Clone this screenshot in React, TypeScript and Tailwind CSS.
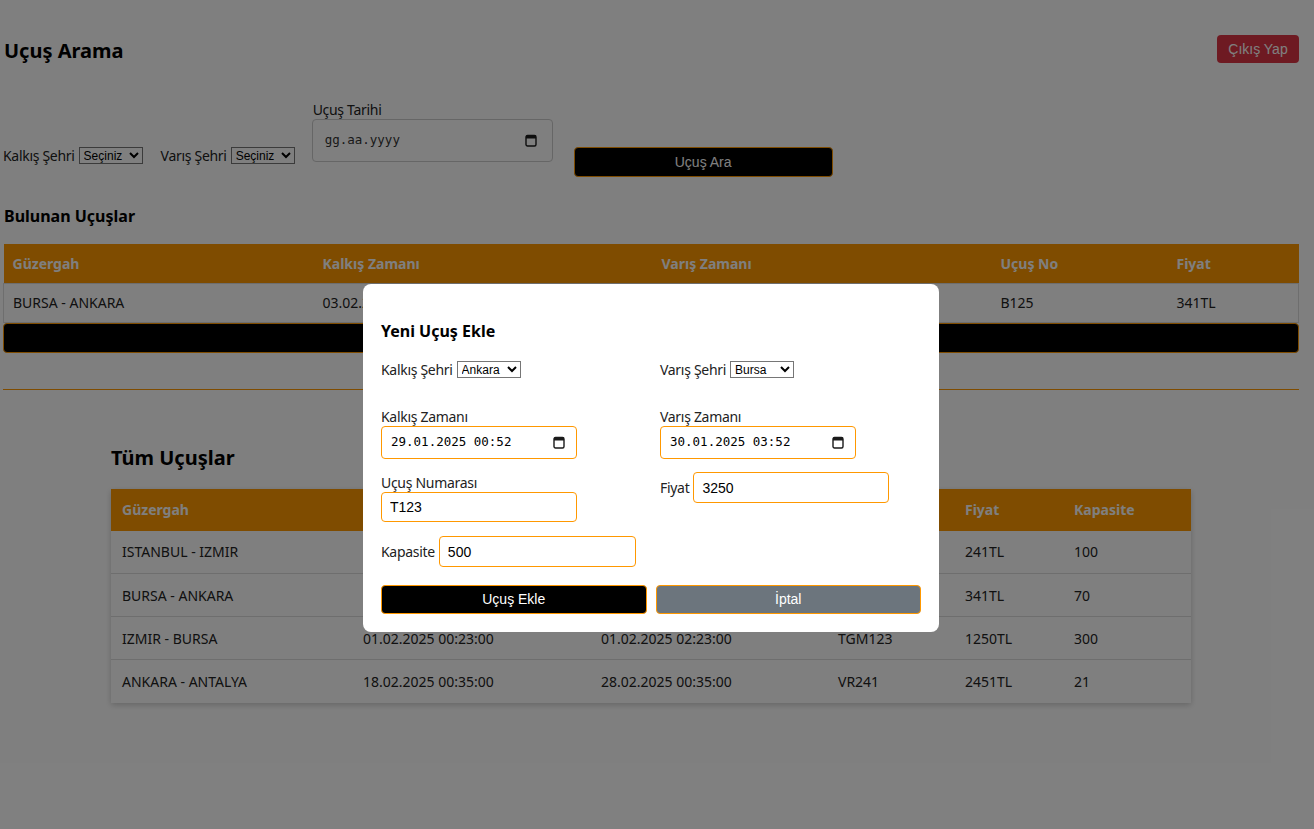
import React from 'react';

const sans = "font-['Segoe_UI','Noto_Sans',sans-serif]";
const arial = "font-['Liberation_Sans',Arial,sans-serif]";
const mono = "font-['DejaVu_Sans_Mono','Liberation_Mono',monospace]";
const tight = 'tracking-[-0.3px]';

const CalendarIcon: React.FC = () => (
    <svg width="12" height="13" viewBox="0 0 12 13" fill="none">
        <rect x="1" y="1.5" width="10" height="10.5" rx="1.5" stroke="#1a1a1a" strokeWidth="1.4" />
        <rect x="1" y="1.5" width="10" height="3" fill="#1a1a1a" />
    </svg>
);

const DateField: React.FC<{ value: string; box: string; placeholder?: boolean }> = ({ value, box, placeholder }) => (
    <div className={`flex items-center justify-between bg-white ${box}`}>
        <span className={`${mono} text-[12.5px] ${placeholder ? 'text-[#333]' : 'text-black'}`}>{value}</span>
        <CalendarIcon />
    </div>
);

const Select: React.FC<{ value: string; options: string[]; w: string }> = ({ value, options, w }) => (
    <select
        defaultValue={value}
        className={`${arial} ${w} h-[17px] text-[12px] leading-none border border-[#767676] bg-white text-black px-0 rounded-none`}
    >
        {options.map(o => <option key={o}>{o}</option>)}
    </select>
);

const found = [
    { route: 'BURSA - ANKARA', dep: '03.02.2025 00:30:00', arr: '03.02.2025 02:30:00', no: 'B125', price: '341TL' },
];

const all = [
    { route: 'ISTANBUL - IZMIR', dep: '02.02.2025 10:00:00', arr: '02.02.2025 11:15:00', no: 'TK241', price: '241TL', cap: '100' },
    { route: 'BURSA - ANKARA', dep: '03.02.2025 00:30:00', arr: '03.02.2025 02:30:00', no: 'B125', price: '341TL', cap: '70' },
    { route: 'IZMIR - BURSA', dep: '01.02.2025 00:23:00', arr: '01.02.2025 02:23:00', no: 'TGM123', price: '1250TL', cap: '300' },
    { route: 'ANKARA - ANTALYA', dep: '18.02.2025 00:35:00', arr: '28.02.2025 00:35:00', no: 'VR241', price: '2451TL', cap: '21' },
];

export default function App() {
    return (
        <div className={`${sans} relative min-h-[829px] bg-white text-[#222] text-[14px] pl-[3px] pr-[15px]`}>
            {/* header */}
            <div className="flex items-center justify-between pt-[35px] h-[63px]">
                <h1 className="text-[20px] font-bold text-black pl-[1px] pt-[3px] leading-none">Uçuş Arama</h1>
                <button className={`${arial} w-[82px] h-[28px] rounded-[4px] bg-[#dc3545] text-white text-[14px]`}>Çıkış Yap</button>
            </div>

            {/* search form */}
            <div className="flex items-start mt-[38px]">
                <div className="flex items-center h-[20px] mt-[44px]">
                    <span className={`${tight} mr-[4px]`}>Kalkış Şehri</span>
                    <Select value="Seçiniz" options={['Seçiniz', 'Ankara', 'Bursa']} w="w-[64px]" />
                </div>
                <div className="flex items-center h-[20px] mt-[44px] ml-[18px]">
                    <span className={`${tight} mr-[4px]`}>Varış Şehri</span>
                    <Select value="Seçiniz" options={['Seçiniz', 'Ankara', 'Bursa']} w="w-[64px]" />
                </div>
                <div className="flex flex-col ml-[17px]">
                    <label className={`${tight} h-[18px] leading-[18px] pl-[1px]`}>Uçuş Tarihi</label>
                    <DateField value="gg.aa.yyyy" placeholder box="w-[241px] h-[43px] border border-[#ccc] rounded-[4px] pl-[12px] pr-[15px]" />
                </div>
                <button className={`${arial} mt-[46px] ml-[21px] w-[259px] h-[30px] bg-black text-white text-[14px] border border-[#ff9800] rounded-[4px]`}>
                    Uçuş Ara
                </button>
            </div>

            {/* found flights */}
            <h2 className="text-[16px] font-bold text-black mt-[27px] pl-[1px] leading-[24px]">Bulunan Uçuşlar</h2>
            <table className="w-full table-fixed border-collapse mt-[16px]">
                <colgroup>
                    <col className="w-[310px]" />
                    <col className="w-[339px]" />
                    <col className="w-[339px]" />
                    <col className="w-[176px]" />
                    <col />
                </colgroup>
                <thead>
                    <tr className="bg-[#ff9800] text-white h-[39px]">
                        {['Güzergah', 'Kalkış Zamanı', 'Varış Zamanı', 'Uçuş No', 'Fiyat'].map(h => (
                            <th key={h} className="text-left font-bold px-[9px]">{h}</th>
                        ))}
                    </tr>
                </thead>
                <tbody>
                    {found.map(f => (
                        <tr key={f.no} className="h-[39px] border border-[#ddd]">
                            <td className="px-[9px]">{f.route}</td>
                            <td className="px-[9px]">{f.dep}</td>
                            <td className="px-[9px]">{f.arr}</td>
                            <td className="px-[9px]">{f.no}</td>
                            <td className="px-[9px]">{f.price}</td>
                        </tr>
                    ))}
                </tbody>
            </table>
            <button className={`${arial} w-full h-[30px] bg-black text-white border border-[#ff9800] rounded-[4px] text-[14px]`}>Yeni Uçuş Ekle</button>

            <div className="mt-[36px] h-px bg-[#ff9800]" />

            {/* all flights */}
            <div className="w-[1080px] mx-auto">
                <h2 className="text-[20px] font-bold text-black mt-[53px] leading-[30px]">Tüm Uçuşlar</h2>
                <table className="w-full table-fixed border-collapse mt-[16px] shadow-[0_2px_6px_rgba(0,0,0,0.2)]">
                    <colgroup>
                        <col className="w-[241px]" />
                        <col className="w-[238px]" />
                        <col className="w-[237px]" />
                        <col className="w-[127px]" />
                        <col className="w-[109px]" />
                        <col />
                    </colgroup>
                    <thead>
                        <tr className="bg-[#ff9800] text-white h-[42px]">
                            {['Güzergah', 'Kalkış Zamanı', 'Varış Zamanı', 'Uçuş No', 'Fiyat', 'Kapasite'].map(h => (
                                <th key={h} className="text-left font-bold px-[11px]">{h}</th>
                            ))}
                        </tr>
                    </thead>
                    <tbody>
                        {all.map(f => (
                            <tr key={f.no} className="h-[43px] border-b border-[#ddd] last:border-b-0">
                                <td className="px-[11px]">{f.route}</td>
                                <td className="px-[11px]">{f.dep}</td>
                                <td className="px-[11px]">{f.arr}</td>
                                <td className="px-[11px]">{f.no}</td>
                                <td className="px-[11px]">{f.price}</td>
                                <td className="px-[11px]">{f.cap}</td>
                            </tr>
                        ))}
                    </tbody>
                </table>
            </div>

            {/* modal */}
            <div className="absolute inset-0 bg-black/50 flex justify-center items-start pt-[284px] pr-[12px]">
                <div className="w-[576px] bg-white rounded-[8px] px-[18px] pb-[18px] pt-[18px] text-[#222]">
                    <h3 className="text-[16px] font-bold text-black mt-[17px] leading-[24px]">Yeni Uçuş Ekle</h3>

                    <div className="grid grid-cols-[279px_261px] mt-[16px]">
                        <div className="flex items-center h-[20px]">
                            <span className={`${tight} mr-[4px]`}>Kalkış Şehri</span>
                            <Select value="Ankara" options={['Ankara', 'Bursa', 'Izmir']} w="w-[64px]" />
                        </div>
                        <div className="flex items-center h-[20px]">
                            <span className={`${tight} mr-[4px]`}>Varış Şehri</span>
                            <Select value="Bursa" options={['Ankara', 'Bursa', 'Izmir']} w="w-[64px]" />
                        </div>
                    </div>

                    <div className="grid grid-cols-[279px_261px] mt-[28px]">
                        <div className="flex flex-col">
                            <label className={`${tight} h-[19px] leading-[19px]`}>Kalkış Zamanı</label>
                            <DateField value="29.01.2025 00:52" box="w-[196px] h-[33px] border border-[#ff9800] rounded-[4px] pl-[9px] pr-[11px]" />
                        </div>
                        <div className="flex flex-col">
                            <label className={`${tight} h-[19px] leading-[19px]`}>Varış Zamanı</label>
                            <DateField value="30.01.2025 03:52" box="w-[196px] h-[33px] border border-[#ff9800] rounded-[4px] pl-[9px] pr-[11px]" />
                        </div>
                    </div>

                    <div className="grid grid-cols-[279px_261px] mt-[13px]">
                        <div className="flex flex-col pt-[1px]">
                            <label className={`${tight} h-[19px] leading-[19px]`}>Uçuş Numarası</label>
                            <input defaultValue="T123" className={`${arial} w-[196px] h-[30px] border border-[#ff9800] rounded-[4px] px-[8px] text-[14px] text-black outline-none`} />
                        </div>
                        <div className="flex items-center self-start">
                            <span className={`${tight} mr-[4px]`}>Fiyat</span>
                            <input defaultValue="3250" className={`${arial} w-[196px] h-[31px] border border-[#ff9800] rounded-[4px] px-[8px] text-[14px] text-black outline-none`} />
                        </div>
                    </div>

                    <div className="flex items-center mt-[14px]">
                        <span className={`${tight} mr-[4px]`}>Kapasite</span>
                        <input defaultValue="500" className={`${arial} w-[197px] h-[31px] border border-[#ff9800] rounded-[4px] px-[8px] text-[14px] text-black outline-none`} />
                    </div>

                    <div className="grid grid-cols-2 gap-x-[9px] mt-[18px]">
                        <button className={`${arial} h-[29px] bg-black text-white border border-[#ff9800] rounded-[4px] text-[14px]`}>Uçuş Ekle</button>
                        <button className={`${arial} h-[29px] bg-[#6c757d] text-white border border-[#ff9800] rounded-[4px] text-[14px]`}>İptal</button>
                    </div>
                </div>
            </div>
        </div>
    );
}
